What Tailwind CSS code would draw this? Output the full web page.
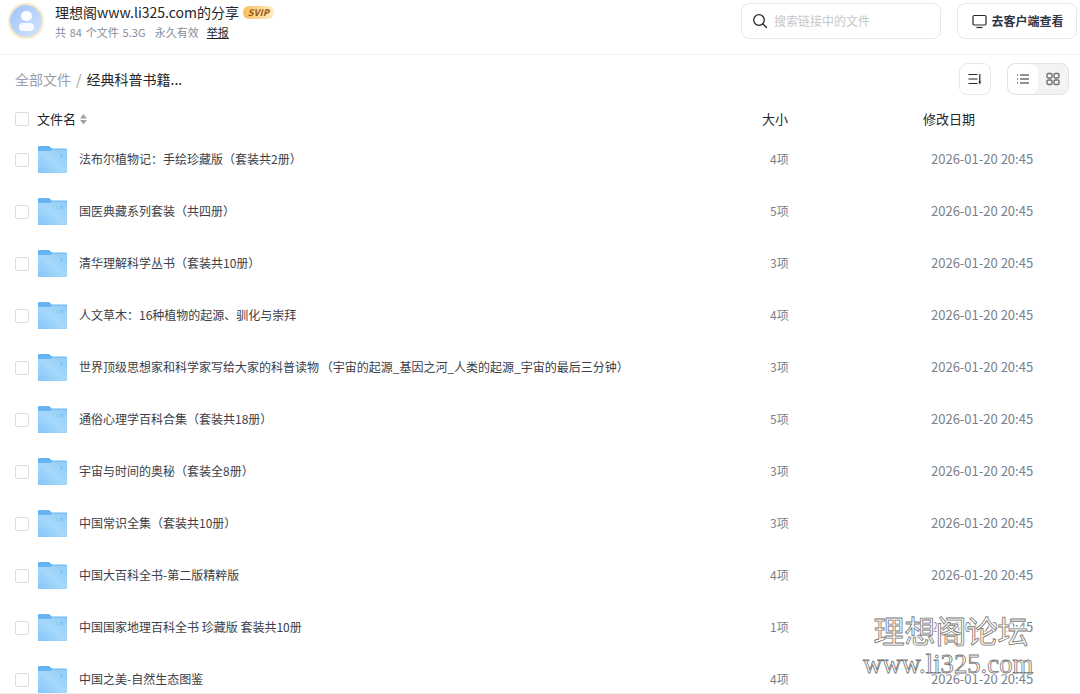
<!DOCTYPE html>
<html lang="zh-CN">
<head>
    <meta charset="UTF-8">
    <title>理想阁www.li325.com的分享</title>
    <script src="https://cdn.jsdelivr.net/npm/@tailwindcss/browser@4"></script>
</head>
<body class="bg-white h-[694px] overflow-hidden relative font-['Noto_Sans_CJK_SC','Noto_Sans',sans-serif] text-[#25262b]">

    <!-- folder icon, reused by every row -->
    <svg class="absolute w-0 h-0">
        <defs>
            <linearGradient id="fold" x1="0" y1="1" x2="1" y2="0">
                <stop offset="0" stop-color="#84c6f8"/>
                <stop offset="0.5" stop-color="#a6d8fb"/>
                <stop offset="1" stop-color="#8fcbf7"/>
            </linearGradient>
        </defs>
        <symbol id="folder" viewBox="0 0 29 27">
            <path d="M1 0h10l3 2.500h14a1 1 0 0 1 1 1v22.500a1 1 0 0 1-1 1H1a1 1 0 0 1-1-1V1a1 1 0 0 1 1-1z" fill="#68b4f2"/>
            <path d="M1 5h10.500l3-1.500H28a1 1 0 0 1 1 1V26a1 1 0 0 1-1 1H1a1 1 0 0 1-1-1V6a1 1 0 0 1 1-1z" fill="url(#fold)"/>
            <rect x="22" y="8" width="3" height="3" rx="0.500" fill="#86c3f3"/>
        </symbol>
    </svg>

    <!-- top bar -->
    <header class="h-[55px] border-b border-[#f0f0f2] flex items-start justify-between pt-[3px] pl-2 pr-[3px]">
        <div class="flex items-start">
            <div class="w-[36px] h-[36px] rounded-full border-2 border-[#fbeac6] bg-gradient-to-br from-[#9cc3fb] to-[#d5e4fd] flex flex-col items-center justify-center gap-[2px]">
                <div class="w-[11px] h-[10px] rounded-full bg-white/95"></div>
                <div class="w-[15px] h-[8px] rounded-full bg-white/90"></div>
            </div>
            <div class="ml-[11px] -mt-[1px]">
                <div class="flex items-center">
                    <span class="text-[14px] leading-[20px]">理想阁www.li325.com的分享</span>
                    <span class="ml-1 w-[31px] h-[13px] rounded-[6px] bg-gradient-to-r from-[#f7bd5c] to-[#fdeec4] text-[#95580a] text-[9px] leading-[13px] font-bold italic tracking-[0.4px] text-center">SVIP</span>
                </div>
                <div class="flex items-center text-[11px] leading-[20px] text-[#878c9c]">
                    <span class="[word-spacing:1px] tracking-[0.1px]">共 84 个文件 5.3G</span>
                    <span class="ml-[9px]">永久有效</span>
                    <span class="ml-2 text-[#25262b] underline">举报</span>
                </div>
            </div>
        </div>
        <div class="flex items-center">
            <div class="w-[200px] h-9 border border-[#e6e6e9] rounded-lg flex items-center pl-[10px]">
                <svg class="w-4 h-4 text-[#25262b]" viewBox="0 0 16 16" fill="none" stroke="currentColor" stroke-width="1.300"><circle cx="7" cy="7" r="5.300"/><path d="M11 11l3.500 3.500" stroke-linecap="round"/></svg>
                <span class="ml-[6px] text-[12px] text-[#c4c6cd]">搜索链接中的文件</span>
            </div>
            <div class="ml-4 w-[120px] h-9 border border-[#e6e6e9] rounded-lg flex items-center justify-center pl-[2px]">
                <svg class="w-[15px] h-[15px] text-[#25262b]" viewBox="0 0 15 15" fill="none" stroke="currentColor" stroke-width="1.200"><rect x="1" y="1.500" width="13" height="9.500" rx="1.200"/><path d="M4.500 13.500h6"/></svg>
                <span class="ml-1 text-[12px] font-bold text-[#2f3446]">去客户端查看</span>
            </div>
        </div>
    </header>

    <!-- breadcrumb and view buttons -->
    <div class="h-[48px] flex items-center justify-between pl-[15px] pr-[11px]">
        <div class="flex items-center text-[14px]">
            <span class="text-[#9a9ea9]">全部文件</span>
            <span class="mx-[5px] text-[#9a9ea9]">/</span>
            <span>经典科普书籍...</span>
        </div>
        <div class="flex items-center">
            <div class="w-8 h-8 border border-[#e9e9ec] rounded-lg flex items-center justify-center">
                <svg class="w-4 h-4 text-[#25262b]" viewBox="0 0 16 16" fill="none" stroke="currentColor" stroke-width="1.200"><path d="M1.500 3.500h9M1.500 8h9M1.500 12.500h9M12.800 3v8"/><path d="M11.300 10.500h3l-1.500 3z" fill="currentColor" stroke="none"/></svg>
            </div>
            <div class="ml-4 w-[62px] h-8 border border-[#e3e3e6] rounded-lg flex overflow-hidden bg-[#f3f3f4]">
                <div class="w-[30px] bg-white rounded-lg flex items-center justify-center">
                    <svg class="w-[14px] h-[14px] text-[#25262b]" viewBox="0 0 14 14" fill="none" stroke="currentColor" stroke-width="1.200"><path d="M1 3h1M4 3h9M1 7h1M4 7h9M1 11h1M4 11h9"/></svg>
                </div>
                <div class="flex-1 flex items-center justify-center">
                    <svg class="w-[14px] h-[14px] text-[#6f7076]" viewBox="0 0 14 14" fill="none" stroke="currentColor" stroke-width="1.400"><rect x="1" y="1.500" width="5" height="4.500" rx="1.300"/><rect x="8" y="1.500" width="5" height="4.500" rx="1.300"/><rect x="1" y="8" width="5" height="4.500" rx="1.300"/><rect x="8" y="8" width="5" height="4.500" rx="1.300"/></svg>
                </div>
            </div>
        </div>
    </div>

    <!-- table header -->
    <div class="mt-[2px] h-[28px] flex items-center pl-[15px] text-[13px]">
        <div class="w-[14px] h-[14px] border border-[#dcdde0] rounded-[2px]"></div>
        <span class="ml-2">文件名</span>
        <svg class="ml-[4px] w-[7px] h-[11px] text-[#a3a3a6]" viewBox="0 0 7 11" fill="currentColor"><path d="M3.500 0L7 4.500H0zM0 6h7L3.500 10.500z"/></svg>
        <span class="ml-auto w-[26px] mr-[135px]">大小</span>
        <span class="w-[52px] mr-[105px]">修改日期</span>
    </div>

    <!-- rows -->
    <div class="text-[12px] text-[#3c3e48]">
        <div class="h-[52px] flex items-center pl-[15px]">
            <div class="mt-[2px] w-[14px] h-[14px] border border-[#dcdde0] rounded-[2px] shrink-0"></div>
            <svg class="ml-[9px] mt-px w-[29px] h-[27px] shrink-0"><use href="#folder"/></svg>
            <span class="ml-3 flex-1">法布尔植物记：手绘珍藏版（套装共2册）</span>
            <span class="w-[20px] text-[#7c7f8b]">4项</span>
            <span class="ml-[141px] mr-[47px] text-[13px] text-[#7c7f8b] w-[102px] whitespace-nowrap">2026-01-20 20:45</span>
        </div>
        <div class="h-[52px] flex items-center pl-[15px]">
            <div class="mt-[2px] w-[14px] h-[14px] border border-[#dcdde0] rounded-[2px] shrink-0"></div>
            <svg class="ml-[9px] mt-px w-[29px] h-[27px] shrink-0"><use href="#folder"/></svg>
            <span class="ml-3 flex-1">国医典藏系列套装（共四册）</span>
            <span class="w-[20px] text-[#7c7f8b]">5项</span>
            <span class="ml-[141px] mr-[47px] text-[13px] text-[#7c7f8b] w-[102px] whitespace-nowrap">2026-01-20 20:45</span>
        </div>
        <div class="h-[52px] flex items-center pl-[15px]">
            <div class="mt-[2px] w-[14px] h-[14px] border border-[#dcdde0] rounded-[2px] shrink-0"></div>
            <svg class="ml-[9px] mt-px w-[29px] h-[27px] shrink-0"><use href="#folder"/></svg>
            <span class="ml-3 flex-1">清华理解科学丛书（套装共10册）</span>
            <span class="w-[20px] text-[#7c7f8b]">3项</span>
            <span class="ml-[141px] mr-[47px] text-[13px] text-[#7c7f8b] w-[102px] whitespace-nowrap">2026-01-20 20:45</span>
        </div>
        <div class="h-[52px] flex items-center pl-[15px]">
            <div class="mt-[2px] w-[14px] h-[14px] border border-[#dcdde0] rounded-[2px] shrink-0"></div>
            <svg class="ml-[9px] mt-px w-[29px] h-[27px] shrink-0"><use href="#folder"/></svg>
            <span class="ml-3 flex-1">人文草木：16种植物的起源、驯化与崇拜</span>
            <span class="w-[20px] text-[#7c7f8b]">4项</span>
            <span class="ml-[141px] mr-[47px] text-[13px] text-[#7c7f8b] w-[102px] whitespace-nowrap">2026-01-20 20:45</span>
        </div>
        <div class="h-[52px] flex items-center pl-[15px]">
            <div class="mt-[2px] w-[14px] h-[14px] border border-[#dcdde0] rounded-[2px] shrink-0"></div>
            <svg class="ml-[9px] mt-px w-[29px] h-[27px] shrink-0"><use href="#folder"/></svg>
            <span class="ml-3 flex-1 [word-spacing:-1px]">世界顶级思想家和科学家写给大家的科普读物 （宇宙的起源_基因之河_人类的起源_宇宙的最后三分钟）</span>
            <span class="w-[20px] text-[#7c7f8b]">3项</span>
            <span class="ml-[141px] mr-[47px] text-[13px] text-[#7c7f8b] w-[102px] whitespace-nowrap">2026-01-20 20:45</span>
        </div>
        <div class="h-[52px] flex items-center pl-[15px]">
            <div class="mt-[2px] w-[14px] h-[14px] border border-[#dcdde0] rounded-[2px] shrink-0"></div>
            <svg class="ml-[9px] mt-px w-[29px] h-[27px] shrink-0"><use href="#folder"/></svg>
            <span class="ml-3 flex-1">通俗心理学百科合集（套装共18册）</span>
            <span class="w-[20px] text-[#7c7f8b]">5项</span>
            <span class="ml-[141px] mr-[47px] text-[13px] text-[#7c7f8b] w-[102px] whitespace-nowrap">2026-01-20 20:45</span>
        </div>
        <div class="h-[52px] flex items-center pl-[15px]">
            <div class="mt-[2px] w-[14px] h-[14px] border border-[#dcdde0] rounded-[2px] shrink-0"></div>
            <svg class="ml-[9px] mt-px w-[29px] h-[27px] shrink-0"><use href="#folder"/></svg>
            <span class="ml-3 flex-1">宇宙与时间的奥秘（套装全8册）</span>
            <span class="w-[20px] text-[#7c7f8b]">3项</span>
            <span class="ml-[141px] mr-[47px] text-[13px] text-[#7c7f8b] w-[102px] whitespace-nowrap">2026-01-20 20:45</span>
        </div>
        <div class="h-[52px] flex items-center pl-[15px]">
            <div class="mt-[2px] w-[14px] h-[14px] border border-[#dcdde0] rounded-[2px] shrink-0"></div>
            <svg class="ml-[9px] mt-px w-[29px] h-[27px] shrink-0"><use href="#folder"/></svg>
            <span class="ml-3 flex-1">中国常识全集（套装共10册）</span>
            <span class="w-[20px] text-[#7c7f8b]">3项</span>
            <span class="ml-[141px] mr-[47px] text-[13px] text-[#7c7f8b] w-[102px] whitespace-nowrap">2026-01-20 20:45</span>
        </div>
        <div class="h-[52px] flex items-center pl-[15px]">
            <div class="mt-[2px] w-[14px] h-[14px] border border-[#dcdde0] rounded-[2px] shrink-0"></div>
            <svg class="ml-[9px] mt-px w-[29px] h-[27px] shrink-0"><use href="#folder"/></svg>
            <span class="ml-3 flex-1">中国大百科全书-第二版精粹版</span>
            <span class="w-[20px] text-[#7c7f8b]">4项</span>
            <span class="ml-[141px] mr-[47px] text-[13px] text-[#7c7f8b] w-[102px] whitespace-nowrap">2026-01-20 20:45</span>
        </div>
        <div class="h-[52px] flex items-center pl-[15px]">
            <div class="mt-[2px] w-[14px] h-[14px] border border-[#dcdde0] rounded-[2px] shrink-0"></div>
            <svg class="ml-[9px] mt-px w-[29px] h-[27px] shrink-0"><use href="#folder"/></svg>
            <span class="ml-3 flex-1">中国国家地理百科全书 珍藏版 套装共10册</span>
            <span class="w-[20px] text-[#7c7f8b]">1项</span>
            <span class="ml-[141px] mr-[47px] text-[13px] text-[#7c7f8b] w-[102px] whitespace-nowrap">2026-01-20 20:45</span>
        </div>
        <div class="h-[52px] flex items-center pl-[15px]">
            <div class="mt-[2px] w-[14px] h-[14px] border border-[#dcdde0] rounded-[2px] shrink-0"></div>
            <svg class="ml-[9px] mt-px w-[29px] h-[27px] shrink-0"><use href="#folder"/></svg>
            <span class="ml-3 flex-1">中国之美-自然生态图鉴</span>
            <span class="w-[20px] text-[#7c7f8b]">4项</span>
            <span class="ml-[141px] mr-[47px] text-[13px] text-[#7c7f8b] w-[102px] whitespace-nowrap">2026-01-20 20:45</span>
        </div>
    </div>

    <!-- bottom edge line and watermark sit over the last rows -->
    <div class="absolute left-0 right-0 bottom-0 h-px bg-[#f0f0f2]"></div>
    <div class="absolute left-[863px] top-[611px] w-[170px] text-center text-white [-webkit-text-stroke:0.8px_#777777] [text-shadow:0_0_3px_#fff,0_0_3px_#fff,0_0_3px_#fff,0_0_3px_#fff,0_0_3px_#fff]">
        <div class="pl-[6px] text-[31px] leading-[38px]">理想阁论坛</div>
        <div class="text-[26.7px] leading-[30px] font-['Liberation_Serif',serif]">www.li325.com</div>
    </div>
</body>
</html>
